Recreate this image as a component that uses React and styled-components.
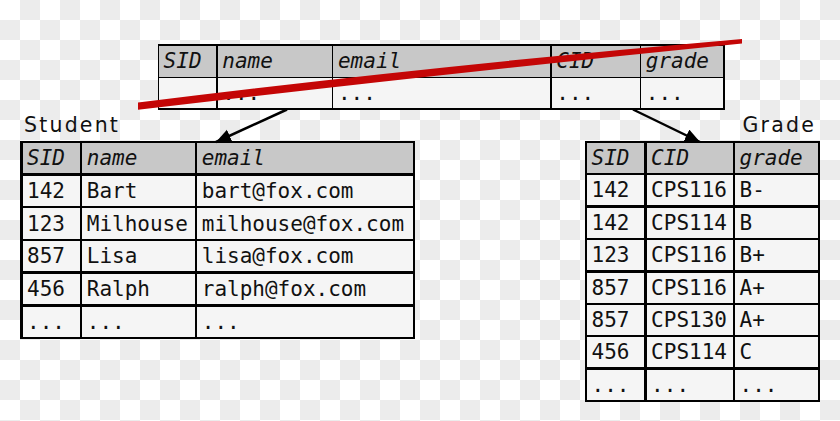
import React from 'react';
import styled, { createGlobalStyle } from 'styled-components';

const GlobalStyle = createGlobalStyle`
  html, body { margin: 0; padding: 0; background: #fff; }
`;

const Page = styled.div`
  position: relative;
  width: 840px;
  height: 421px;
  overflow: hidden;
  box-sizing: border-box;
  padding-top: 44px;
  background-color: #fff;
  background-image: conic-gradient(#ececec 0 25%, #fff 0 50%, #ececec 0 75%, #fff 0);
  background-size: 40px 40px;
`;

const TopRow = styled.div`
  padding-left: 157.5px;
`;

const Grid = styled.div`
  display: grid;
  width: max-content;
  grid-template-columns: ${p => p.$cols};
  grid-template-rows: ${p => p.$rows};
  gap: ${p => p.$line}px;
  padding: ${p => p.$line}px;
  background: #000;
`;

const Cell = styled.div`
  display: flex;
  align-items: center;
  box-sizing: border-box;
  padding: 1px 0 0 4.5px;
  overflow: hidden;
  white-space: pre;
  background: ${p => (p.$head ? '#c8c8c8' : '#f5f5f5')};
  color: #111;
  font-family: 'DejaVu Sans Mono', 'Liberation Mono', monospace;
  font-style: ${p => (p.$head ? 'italic' : 'normal')};
  font-size: 21px;
  line-height: 1;
`;

const Bottom = styled.div`
  display: flex;
  justify-content: space-between;
  padding: 0 20px;
`;

const Block = styled.div`
  display: flex;
  flex-direction: column;
`;

const Label = styled.div`
  height: 31px;
  line-height: 31px;
  padding: ${p => (p.$right ? '0 4px 0 0' : '0 0 0 4px')};
  text-align: ${p => (p.$right ? 'right' : 'left')};
  font-family: 'DejaVu Sans', 'Liberation Sans', sans-serif;
  font-size: 20.5px;
  letter-spacing: 2.2px;
  color: #111;
`;

const Overlay = styled.svg`
  position: absolute;
  left: 0;
  top: 0;
  pointer-events: none;
`;

const Table = ({ cols, rows, line, head, data }) => (
  <Grid $cols={cols} $rows={rows} $line={line}>
    {head.map(h => <Cell key={'h' + h} $head>{h}</Cell>)}
    {data.map((r, i) => r.map((v, j) => <Cell key={i + '-' + j}>{v}</Cell>))}
  </Grid>
);

const students = [
  ['142', 'Bart', 'bart@fox.com'],
  ['123', 'Milhouse', 'milhouse@fox.com'],
  ['857', 'Lisa', 'lisa@fox.com'],
  ['456', 'Ralph', 'ralph@fox.com'],
  ['...', '...', '...'],
];

const grades = [
  ['142', 'CPS116', 'B-'],
  ['142', 'CPS114', 'B'],
  ['123', 'CPS116', 'B+'],
  ['857', 'CPS116', 'A+'],
  ['857', 'CPS130', 'A+'],
  ['456', 'CPS114', 'C'],
  ['...', '...', '...'],
];

export default function App() {
  return (
    <Page>
      <GlobalStyle />
      <TopRow>
        <Table
          cols="57.1px 114.1px 216.7px 87.9px 82.2px"
          rows="31.1px 29.7px"
          line={1.6}
          head={['SID', 'name', 'email', 'CID', 'grade']}
          data={[['', '...', '...', '...', '...']]}
        />
      </TopRow>
      <Bottom>
        <Block>
          <Label>Student</Label>
          <Table
            cols="57.25px 112.5px 215.25px"
            rows="repeat(6, 30.2px)"
            line={2.5}
            head={['SID', 'name', 'email']}
            data={students}
          />
        </Block>
        <Block>
          <Label $right>Grade</Label>
          <Table
            cols="57.1px 85.9px 82.5px"
            rows="repeat(8, 29.9px)"
            line={2.5}
            head={['SID', 'CID', 'grade']}
            data={grades}
          />
        </Block>
      </Bottom>
      <Overlay width="840" height="421" viewBox="0 0 840 421">
        <defs>
          <marker id="head" markerUnits="userSpaceOnUse" markerWidth="16" markerHeight="14"
            refX="15" refY="6.5" orient="auto">
            <path d="M0,0 L15,6.5 L0,13 z" fill="#000" />
          </marker>
        </defs>
        <line x1="287" y1="109.5" x2="216" y2="142" stroke="#000" strokeWidth="2.5" markerEnd="url(#head)" />
        <line x1="633" y1="109.5" x2="700" y2="142" stroke="#000" strokeWidth="2.5" markerEnd="url(#head)" />
        <path d="M138,102.5 Q430,66 742,39 L742,43.5 Q430,75 138,109.8 Z" fill="#c40606" />
      </Overlay>
    </Page>
  );
}
